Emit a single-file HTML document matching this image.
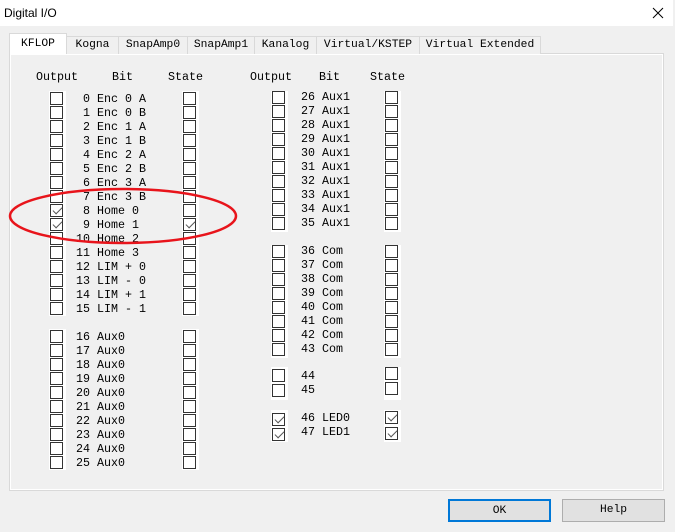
<!DOCTYPE html>
<html><head><meta charset="utf-8"><style>
*{margin:0;padding:0;box-sizing:border-box}
body{width:675px;height:532px;background:#f0f0f0;position:relative;overflow:hidden;font-family:"Liberation Mono",monospace;font-size:11.67px;color:#000}
.a{position:absolute}
.title{left:0;top:0;width:673px;height:26px;background:#fff;font-family:"Liberation Sans",sans-serif;font-size:12px;padding:6px 0 0 4px}
.tab{position:absolute;top:36px;height:18px;background:#f0f0f0;border:1px solid #d9d9d9;border-bottom:none;text-align:center;line-height:16px;font-size:11.3px}
.panel{left:9px;top:53px;width:655px;height:438px;border:1px solid #d9d9d9;background:#f0f0f0;box-shadow:inset 1px 1px 0 #fff,inset -1px -1px 0 #fff}
.strip{position:absolute;background:#fff;width:17px}
.cb{position:absolute;width:13px;height:13px;border:1px solid #333;background:#fff}
.cb.k::after{content:"";position:absolute;left:2px;top:0px;width:8px;height:4px;border-left:1px solid #555;border-bottom:1px solid #555;transform:rotate(-45deg);margin-top:2px}
.t{position:absolute;white-space:pre;line-height:14px;top:0}
.btn{position:absolute;top:499px;width:103px;height:23px;background:#e1e1e1;text-align:center;line-height:20px;font-size:11.3px}
</style></head><body>
<div class="a title">Digital I/O</div>
<svg class="a" style="left:652px;top:7px" width="12" height="12"><path d="M1 1L11 11M11 1L1 11" stroke="#000" stroke-width="1"/></svg>

<div class="a panel"></div>
<div class="tab" style="left:66px;width:53px">Kogna</div>
<div class="tab" style="left:118px;width:70px">SnapAmp0</div>
<div class="tab" style="left:187px;width:68px">SnapAmp1</div>
<div class="tab" style="left:254px;width:63px">Kanalog</div>
<div class="tab" style="left:316px;width:104px">Virtual/KSTEP</div>
<div class="tab" style="left:419px;width:122px">Virtual Extended</div>
<div class="tab" style="left:9px;top:33px;width:58px;height:21px;background:#fff;line-height:20px;z-index:2">KFLOP</div>

<div class="t" style="left:36px;top:70px">Output</div>
<div class="t" style="left:112px;top:70px">Bit</div>
<div class="t" style="left:168px;top:70px">State</div>
<div class="t" style="left:250px;top:70px">Output</div>
<div class="t" style="left:319px;top:70px">Bit</div>
<div class="t" style="left:370px;top:70px">State</div>

<div class="strip" style="left:49px;top:91px;height:225px"></div>
<div class="strip" style="left:182px;top:91px;height:225px"></div>
<div class="strip" style="left:49px;top:329px;height:141px"></div>
<div class="strip" style="left:182px;top:329px;height:141px"></div>
<div class="strip" style="left:271px;top:91px;height:141px"></div>
<div class="strip" style="left:384px;top:91px;height:141px"></div>
<div class="strip" style="left:271px;top:245px;height:113px"></div>
<div class="strip" style="left:384px;top:245px;height:113px"></div>
<div class="strip" style="left:271px;top:367px;height:33px"></div>
<div class="strip" style="left:384px;top:367px;height:33px"></div>
<div class="strip" style="left:271px;top:410px;height:32px"></div>
<div class="strip" style="left:384px;top:410px;height:32px"></div>

<div class="t" style="left:76px;top:92px"> 0 Enc 0 A
 1 Enc 0 B
 2 Enc 1 A
 3 Enc 1 B
 4 Enc 2 A
 5 Enc 2 B
 6 Enc 3 A
 7 Enc 3 B
 8 Home 0
 9 Home 1
10 Home 2
11 Home 3
12 LIM + 0
13 LIM - 0
14 LIM + 1
15 LIM - 1</div>
<div class="t" style="left:76px;top:330px">16 Aux0
17 Aux0
18 Aux0
19 Aux0
20 Aux0
21 Aux0
22 Aux0
23 Aux0
24 Aux0
25 Aux0</div>
<div class="t" style="left:301px;top:90px">26 Aux1
27 Aux1
28 Aux1
29 Aux1
30 Aux1
31 Aux1
32 Aux1
33 Aux1
34 Aux1
35 Aux1</div>
<div class="t" style="left:301px;top:244px">36 Com
37 Com
38 Com
39 Com
40 Com
41 Com
42 Com
43 Com</div>
<div class="t" style="left:301px;top:369px">44
45</div>
<div class="t" style="left:301px;top:411px">46 LED0
47 LED1</div>

<div class="cb" style="left:50px;top:92px"></div><div class="cb" style="left:183px;top:92px"></div>
<div class="cb" style="left:50px;top:106px"></div><div class="cb" style="left:183px;top:106px"></div>
<div class="cb" style="left:50px;top:120px"></div><div class="cb" style="left:183px;top:120px"></div>
<div class="cb" style="left:50px;top:134px"></div><div class="cb" style="left:183px;top:134px"></div>
<div class="cb" style="left:50px;top:148px"></div><div class="cb" style="left:183px;top:148px"></div>
<div class="cb" style="left:50px;top:162px"></div><div class="cb" style="left:183px;top:162px"></div>
<div class="cb" style="left:50px;top:176px"></div><div class="cb" style="left:183px;top:176px"></div>
<div class="cb" style="left:50px;top:190px"></div><div class="cb" style="left:183px;top:190px"></div>
<div class="cb k" style="left:50px;top:204px"></div><div class="cb" style="left:183px;top:204px"></div>
<div class="cb k" style="left:50px;top:218px"></div><div class="cb k" style="left:183px;top:218px"></div>
<div class="cb" style="left:50px;top:232px"></div><div class="cb" style="left:183px;top:232px"></div>
<div class="cb" style="left:50px;top:246px"></div><div class="cb" style="left:183px;top:246px"></div>
<div class="cb" style="left:50px;top:260px"></div><div class="cb" style="left:183px;top:260px"></div>
<div class="cb" style="left:50px;top:274px"></div><div class="cb" style="left:183px;top:274px"></div>
<div class="cb" style="left:50px;top:288px"></div><div class="cb" style="left:183px;top:288px"></div>
<div class="cb" style="left:50px;top:302px"></div><div class="cb" style="left:183px;top:302px"></div>

<div class="cb" style="left:50px;top:330px"></div><div class="cb" style="left:183px;top:330px"></div>
<div class="cb" style="left:50px;top:344px"></div><div class="cb" style="left:183px;top:344px"></div>
<div class="cb" style="left:50px;top:358px"></div><div class="cb" style="left:183px;top:358px"></div>
<div class="cb" style="left:50px;top:372px"></div><div class="cb" style="left:183px;top:372px"></div>
<div class="cb" style="left:50px;top:386px"></div><div class="cb" style="left:183px;top:386px"></div>
<div class="cb" style="left:50px;top:400px"></div><div class="cb" style="left:183px;top:400px"></div>
<div class="cb" style="left:50px;top:414px"></div><div class="cb" style="left:183px;top:414px"></div>
<div class="cb" style="left:50px;top:428px"></div><div class="cb" style="left:183px;top:428px"></div>
<div class="cb" style="left:50px;top:442px"></div><div class="cb" style="left:183px;top:442px"></div>
<div class="cb" style="left:50px;top:456px"></div><div class="cb" style="left:183px;top:456px"></div>

<div class="cb" style="left:272px;top:91px"></div><div class="cb" style="left:385px;top:91px"></div>
<div class="cb" style="left:272px;top:105px"></div><div class="cb" style="left:385px;top:105px"></div>
<div class="cb" style="left:272px;top:119px"></div><div class="cb" style="left:385px;top:119px"></div>
<div class="cb" style="left:272px;top:133px"></div><div class="cb" style="left:385px;top:133px"></div>
<div class="cb" style="left:272px;top:147px"></div><div class="cb" style="left:385px;top:147px"></div>
<div class="cb" style="left:272px;top:161px"></div><div class="cb" style="left:385px;top:161px"></div>
<div class="cb" style="left:272px;top:175px"></div><div class="cb" style="left:385px;top:175px"></div>
<div class="cb" style="left:272px;top:189px"></div><div class="cb" style="left:385px;top:189px"></div>
<div class="cb" style="left:272px;top:203px"></div><div class="cb" style="left:385px;top:203px"></div>
<div class="cb" style="left:272px;top:217px"></div><div class="cb" style="left:385px;top:217px"></div>

<div class="cb" style="left:272px;top:245px"></div><div class="cb" style="left:385px;top:245px"></div>
<div class="cb" style="left:272px;top:259px"></div><div class="cb" style="left:385px;top:259px"></div>
<div class="cb" style="left:272px;top:273px"></div><div class="cb" style="left:385px;top:273px"></div>
<div class="cb" style="left:272px;top:287px"></div><div class="cb" style="left:385px;top:287px"></div>
<div class="cb" style="left:272px;top:301px"></div><div class="cb" style="left:385px;top:301px"></div>
<div class="cb" style="left:272px;top:315px"></div><div class="cb" style="left:385px;top:315px"></div>
<div class="cb" style="left:272px;top:329px"></div><div class="cb" style="left:385px;top:329px"></div>
<div class="cb" style="left:272px;top:343px"></div><div class="cb" style="left:385px;top:343px"></div>

<div class="cb" style="left:272px;top:369px"></div><div class="cb" style="left:385px;top:367px"></div>
<div class="cb" style="left:272px;top:384px"></div><div class="cb" style="left:385px;top:382px"></div>

<div class="cb k" style="left:272px;top:413px"></div><div class="cb k" style="left:385px;top:411px"></div>
<div class="cb k" style="left:272px;top:428px"></div><div class="cb k" style="left:385px;top:427px"></div>

<svg class="a" style="left:0;top:0" width="675" height="532"><ellipse cx="123" cy="216" rx="113" ry="27" fill="none" stroke="#e8141b" stroke-width="2.5"/></svg>

<div class="btn" style="left:448px;border:2px solid #0078d7">OK</div>
<div class="btn" style="left:562px;border:1px solid #adadad;line-height:21px">Help</div>
</body></html>
